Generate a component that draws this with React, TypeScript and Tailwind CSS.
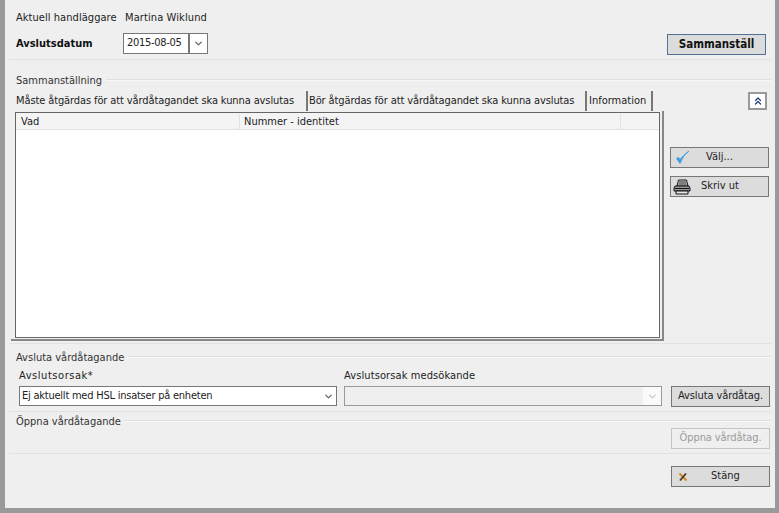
import { ChevronDown, ChevronsUp } from 'lucide-react'

function PrinterIcon() {
  return (
    <svg width="18" height="16" viewBox="0 0 18 16" className="shrink-0">
      <path d="M5.5 1h8l1.5 6H4z" fill="#dcdcdc" stroke="#111" />
      <path d="M6 3h7M5.5 5h8" stroke="#222" />
      <path d="M2 7h14l1 2v3H1V9z" fill="#9a9a9a" stroke="#111" />
      <path d="M2 9.5h14" stroke="#111" />
      <path d="M3 12h12v3H3z" fill="#e8e8e8" stroke="#111" />
    </svg>
  )
}

function CheckIcon() {
  return (
    <svg width="15" height="15" viewBox="0 0 15 15" className="shrink-0">
      <path d="M1.5 8.5 L5 13.5 C7 8 10 4 14 1 C10 4 7 7 5 9.5 L3.5 7.5 z" fill="#3a9ae0" stroke="#3a9ae0" strokeWidth="0.8" />
    </svg>
  )
}

function CrossIcon() {
  return (
    <svg width="10" height="10" viewBox="0 0 10 10" className="shrink-0">
      <path d="M1.5 1.5 L8.5 8.5" stroke="#d08a20" strokeWidth="2" />
      <path d="M8 1.5 L2 8.5" stroke="#4a3a20" strokeWidth="1.8" />
    </svg>
  )
}

function Legend({ text }: { text: string }) {
  return (
    <div className="flex h-[14px] items-center pl-[7px]">
      <span className="pr-1 pt-[1px] leading-[14px] text-[#333]">{text}</span>
      <div className="h-[2px] flex-1 border-t border-[#e0e0e0] bg-[#f8f8f8]" />
    </div>
  )
}

export default function App() {
  return (
    <div className="h-[513px] w-[779px] overflow-hidden whitespace-nowrap bg-[#9a9a9a] pb-[5px] pl-[5px] pr-[4px] font-['DejaVu_Sans_Condensed','DejaVu_Sans',sans-serif] text-[11px] text-[#222]">
      <div className="flex h-full flex-col bg-[#efefef]">
        {/* Top */}
        <div className="mx-[4px] flex h-[60px] border-b border-[#e2e2e2]">
          <div className="flex flex-1 flex-col pl-[7px] pt-[11px]">
            <div className="flex h-[14px] items-center">
              <span className="w-[109px] tracking-[0.05px]">Aktuell handläggare</span>
              <span className="tracking-[0.1px]">Martina Wiklund</span>
            </div>
            <div className="mt-[8px] flex items-center">
              <span className="w-[107px] pt-[2px] text-[11px] font-bold text-[#111]">Avslutsdatum</span>
              <div className="flex h-[21px] w-[85px] items-center border border-[#777] bg-white">
                <span className="w-[64px] pl-[3px] tracking-[-0.3px]">2015-08-05</span>
                <div className="flex h-full flex-1 items-center justify-center border-l-2 border-[#777]">
                  <ChevronDown size={11} strokeWidth={3} color="#666" />
                </div>
              </div>
            </div>
          </div>
          <button className="mr-[5px] mt-[34px] h-[21px] w-[99px] border border-[#4f7296] bg-[#dcdcdc] text-[11.5px] font-bold text-[#111]">
            Sammanställ
          </button>
        </div>

        {/* Sammanställning */}
        <div className="mx-[4px] mt-[13px] flex h-[271px] flex-col border-b border-[#e2e2e2]">
          <Legend text="Sammanställning" />
          <div className="flex flex-1">
            <div className="flex w-[655px] flex-col">
              <div className="flex h-[24px] items-end pl-[5px]">
                <div className="flex h-[20px] w-[292px] items-center pl-[2px] pt-[1px] tracking-[-0.11px]">Måste åtgärdas för att vårdåtagandet ska kunna avslutas</div>
                <div className="flex h-[20px] w-[279px] items-center border-l-2 border-[#777] pl-[1px] pt-[1px] tracking-[-0.11px]">Bör åtgärdas för att vårdåtagandet ska kunna avslutas</div>
                <div className="flex h-[20px] w-[68px] items-center border-x-2 border-[#777] pl-[2px] pt-[1px]">Information</div>
              </div>
              <div className="ml-[2px] w-[653px] border-b-2 border-r-2 border-[#888] pb-[1px] pl-[4px] pr-[2px] pt-[1px]">
                <div className="flex h-[226px] flex-col border border-[#666] bg-white">
                  <div className="flex h-[17px] border-b border-[#e2e2e2] bg-[#f4f4f4] pt-[1px]">
                    <div className="w-[224px] border-r border-[#e2e2e2] pl-[5px]">Vad</div>
                    <div className="w-[381px] border-r border-[#e2e2e2] pl-[4px]">Nummer - identitet</div>
                  </div>
                </div>
              </div>
            </div>
            <div className="flex flex-1 flex-col pl-[6px]">
              <button className="ml-[78px] mt-[5px] flex h-[18px] w-[19px] items-center justify-center border-2 border-[#999] bg-white">
                <ChevronsUp size={12} strokeWidth={2.5} color="#1f3f78" />
              </button>
              <button className="mt-[37px] flex h-[21px] w-[99px] items-center border border-[#777] bg-[#dcdcdc] pl-[4px]">
                <CheckIcon />
                <span className="pl-[16px]">Välj...</span>
              </button>
              <button className="mt-[8px] flex h-[21px] w-[99px] items-center border border-[#777] bg-[#dcdcdc] pl-[2px]">
                <PrinterIcon />
                <span className="pl-[10px]">Skriv ut</span>
              </button>
            </div>
          </div>
        </div>

        {/* Avsluta */}
        <div className="mx-[4px] mt-[6px] flex h-[62px] flex-col border-b border-[#e2e2e2]">
          <Legend text="Avsluta vårdåtagande" />
          <div className="flex pl-[10px]">
            <div className="w-[325px]">
              <div className="h-[21px] pt-[5px] leading-[14px] tracking-[0.55px]">Avslutsorsak*</div>
              <div className="mt-[1px] flex h-[20px] w-[318px] items-center justify-between border border-[#777] bg-white pl-[2px] pr-[2px]">
                <span className="tracking-[-0.23px]">Ej aktuellt med HSL insatser på enheten</span>
                <ChevronDown size={11} strokeWidth={3} color="#666" />
              </div>
            </div>
            <div className="w-[327px]">
              <div className="h-[21px] pt-[5px] leading-[14px] tracking-[0.1px]">Avslutsorsak medsökande</div>
              <div className="mt-[1px] flex h-[20px] w-[318px] items-center justify-end border border-[#999] bg-[#efefef]">
                <div className="flex h-full w-[18px] items-center justify-center bg-[#fafafa]">
                  <ChevronDown size={11} strokeWidth={3} color="#ccc" />
                </div>
              </div>
            </div>
            <button className="mt-[22px] h-[21px] w-[99px] border border-[#777] bg-[#dcdcdc] tracking-[-0.1px]">Avsluta vårdåtag.</button>
          </div>
        </div>

        {/* Öppna */}
        <div className="mx-[4px] mt-[2px] flex h-[40px] flex-col border-b border-[#e2e2e2]">
          <Legend text="Öppna vårdåtagande" />
          <button className="ml-auto mr-[1px] h-[21px] w-[99px] border border-[#c4c4c4] tracking-[-0.1px] text-[#9c9c9c]">Öppna vårdåtag.</button>
        </div>

        <div className="flex justify-end pr-[5px] pt-[12px]">
          <button className="flex h-[21px] w-[99px] items-center border border-[#777] bg-[#dcdcdc] pl-[6px]">
            <CrossIcon />
            <span className="pl-[23px]">Stäng</span>
          </button>
        </div>
      </div>
    </div>
  )
}
